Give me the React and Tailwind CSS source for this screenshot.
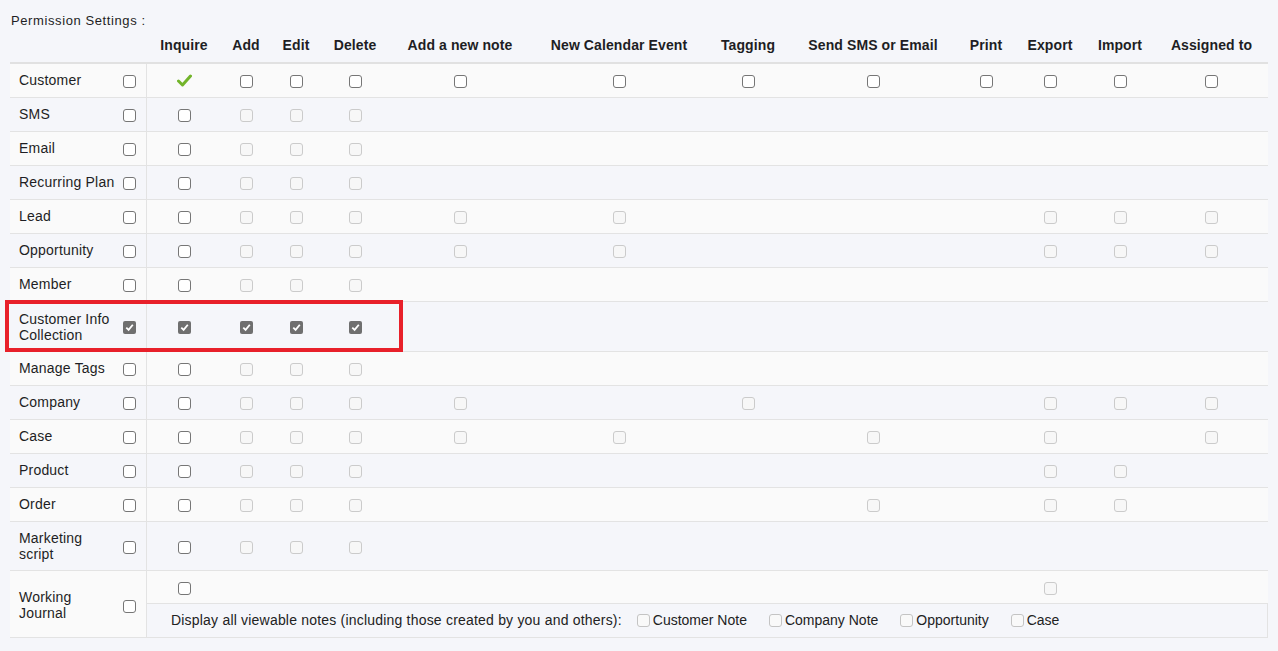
import React from "react";

const COLS = [
  "Inquire",
  "Add",
  "Edit",
  "Delete",
  "Add a new note",
  "New Calendar Event",
  "Tagging",
  "Send SMS or Email",
  "Print",
  "Export",
  "Import",
  "Assigned to",
];

const GRID = "grid grid-cols-[74px_50px_50px_68px_142px_176px_82px_168px_58px_70px_70px_113px]";

// e = enabled, d = disabled, c = checked, g = green check, _ = none
const ROWS = [
  { label: "Customer", row: "e", cells: "geeeeeeeeeee" },
  { label: "SMS", row: "e", cells: "eddd________" },
  { label: "Email", row: "e", cells: "eddd________" },
  { label: "Recurring Plan", row: "e", cells: "eddd________" },
  { label: "Lead", row: "e", cells: "eddd" + "dd___ddd" },
  { label: "Opportunity", row: "e", cells: "eddd" + "dd___ddd" },
  { label: "Member", row: "e", cells: "eddd________" },
  { label: ["Customer Info", "Collection"], row: "c", cells: "cccc________", h: "h-[50px]", marked: true },
  { label: "Manage Tags", row: "e", cells: "eddd________" },
  { label: "Company", row: "e", cells: "eddd" + "d_d__ddd" },
  { label: "Case", row: "e", cells: "eddd" + "dd_d_d_d" },
  { label: "Product", row: "e", cells: "eddd" + "_____dd_" },
  { label: "Order", row: "e", cells: "eddd" + "___d_dd_" },
  { label: ["Marketing", "script"], row: "e", cells: "eddd________", h: "h-[49px]" },
];

const Box = ({ s }) => {
  if (s === "_" || !s) return null;
  if (s === "g")
    return (
      <svg width="15" height="13" viewBox="0 0 15 13" className="translate-y-[-1px]">
        <path d="M1.5 7 L5.5 11 L13.5 2" fill="none" stroke="#72b42a" strokeWidth="3" strokeLinecap="round" strokeLinejoin="round" />
      </svg>
    );
  if (s === "c")
    return (
      <span className="flex h-[13px] w-[13px] items-center justify-center rounded-[2px] bg-[#6f6f6f]">
        <svg width="9" height="9" viewBox="0 0 9 9">
          <path d="M1.3 4.6 L3.6 6.9 L7.8 1.8" fill="none" stroke="#fff" strokeWidth="1.8" />
        </svg>
      </span>
    );
  if (s === "d")
    return <span className="block h-[13px] w-[13px] rounded-[3px] border border-[#cbcbcb] bg-[#f7f7f7]" />;
  return <span className="block h-[13px] w-[13px] rounded-[3px] border border-[#767676] bg-white" />;
};

const Label = ({ label }) =>
  Array.isArray(label) ? (
    <div className="leading-[16px]">
      {label.map((l) => (
        <div key={l}>{l}</div>
      ))}
    </div>
  ) : (
    <div className="leading-[17px]">{label}</div>
  );

const Row = ({ r, i }) => (
  <div
    className={`relative flex border-b border-[#e3e3e3] ${r.h || "h-[34px]"} ${i % 2 === 0 ? "bg-[#fafafa]" : ""}`}
  >
    <div className="flex w-[137px] shrink-0 items-center justify-between border-r border-[#e3e3e3] pl-[9px] pr-[10px]">
      <Label label={r.label} />
      <span className="translate-y-[1px]">
        <Box s={r.row} />
      </span>
    </div>
    <div className={GRID}>
      {r.cells.split("").map((c, k) => (
        <div key={k} className="flex translate-y-[1px] items-center justify-center">
          <Box s={c} />
        </div>
      ))}
    </div>
    {r.marked && (
      <div className="pointer-events-none absolute -left-[5px] -top-[2px] h-[52px] w-[398px] border-4 border-[#e8202a]" />
    )}
  </div>
);

const NoteOpt = ({ text }) => (
  <span className="flex items-center tracking-normal">
    <span className="mr-[3px] block h-[13px] w-[13px] rounded-[3px] border border-[#c4c4c4] bg-[#f9f9f9]" />
    {text}
  </span>
);

export default function App() {
  return (
    <div
      className="min-h-screen bg-[#f5f6fa] pl-[10px] text-[14px] text-[#1e1e24]"
      style={{ fontFamily: '"Liberation Sans", Arial, sans-serif' }}
    >
      <div className="w-[1258px]">
        <div className="pl-[1px] pt-[13px] text-[13px] leading-[15px] tracking-[0.6px]">Permission Settings :</div>

        {/* header */}
        <div className="flex h-[36px] border-b-2 border-[#e1e1e1] font-bold tracking-[0.1px]">
          <div className="w-[137px] shrink-0" />
          <div className={GRID}>
            {COLS.map((c) => (
              <div key={c} className="flex items-center justify-center whitespace-nowrap">
                {c}
              </div>
            ))}
          </div>
        </div>

        <div className="tracking-[0.2px]">
          {ROWS.map((r, i) => (
            <Row key={i} r={r} i={i} />
          ))}

          {/* Working Journal */}
          <div className="flex h-[67px] border-b border-[#e3e3e3] bg-[#fafafa]">
            <div className="flex w-[137px] shrink-0 items-center justify-between border-r border-[#e3e3e3] pl-[9px] pr-[10px] pt-[2px]">
              <Label label={["Working", "Journal"]} />
              <span className="translate-y-[1px]">
                <Box s="e" />
              </span>
            </div>
            <div className="flex flex-1 flex-col">
              <div className={`${GRID} h-[33px] border-b border-[#e3e3e3]`}>
                {"e________d__".split("").map((c, k) => (
                  <div key={k} className="flex translate-y-[1px] items-center justify-center">
                    <Box s={c} />
                  </div>
                ))}
              </div>
              <div className="flex flex-1 items-center gap-[22px] border-r border-[#e3e3e3] bg-[#f5f6fa] pl-[24px] text-[#222]">
                <span className="mr-[-7px]">Display all viewable notes (including those created by you and others):</span>
                <NoteOpt text="Customer Note" />
                <NoteOpt text="Company Note" />
                <NoteOpt text="Opportunity" />
                <NoteOpt text="Case" />
              </div>
            </div>
          </div>
        </div>
      </div>
    </div>
  );
}
